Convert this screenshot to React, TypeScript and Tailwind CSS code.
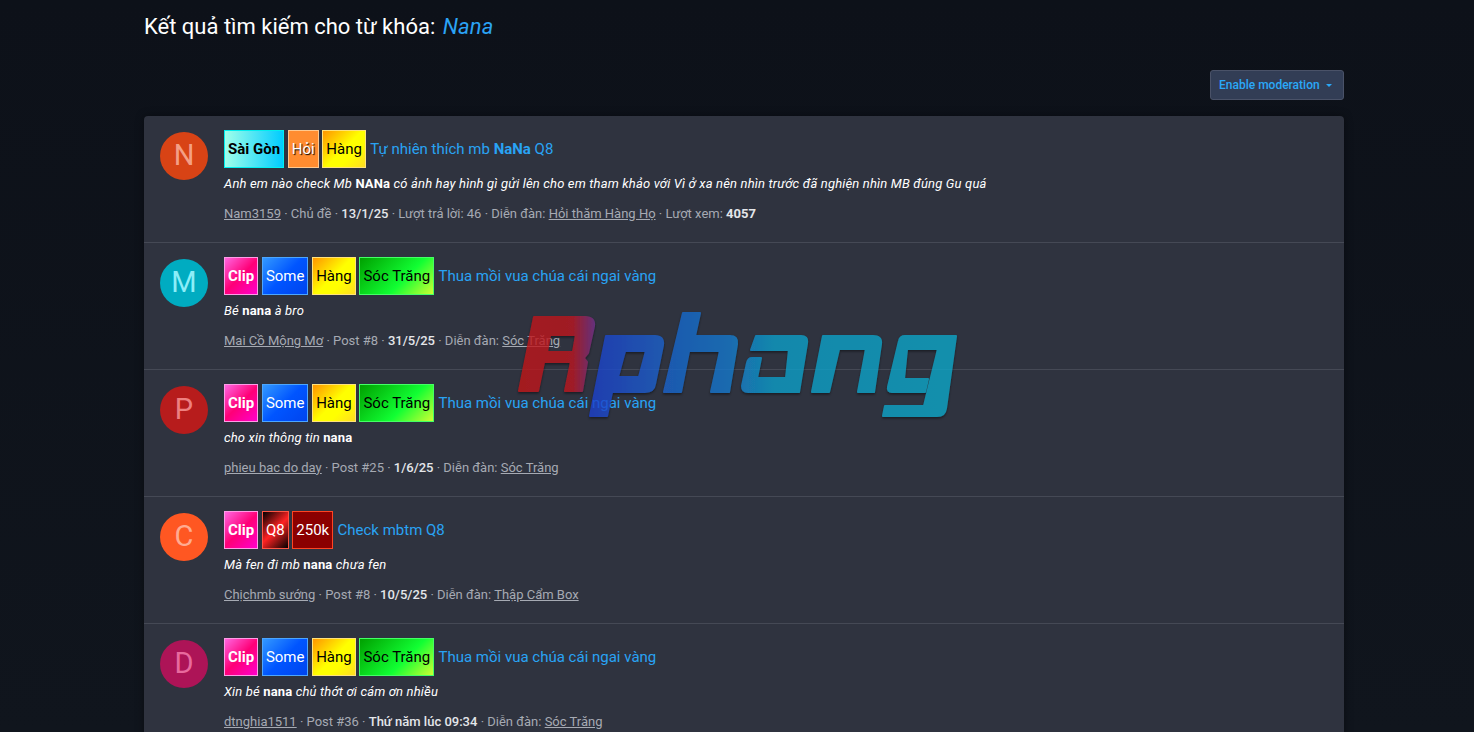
import React from "react";

type LabelKind = "saigon" | "hoi" | "hang" | "clip" | "some" | "soctrang" | "q8" | "k250";

const labelMap: Record<LabelKind, { text: string; cls: string }> = {
  saigon: {
    text: "Sài Gòn",
    cls: "font-bold text-black border-[#00f0f0] bg-[linear-gradient(90deg,#a0ffea,#00ccff)]",
  },
  hoi: {
    text: "Hỏi",
    cls: "text-white border-[#ffc98f] bg-[#ff8c30] [text-shadow:1px_1px_1px_#000]",
  },
  hang: {
    text: "Hàng",
    cls: "text-black border-[#ffe27a] bg-[linear-gradient(135deg,#ff9500,#ffff00_50%,#ffff00_68%,#ffdd22)]",
  },
  clip: {
    text: "Clip",
    cls: "font-bold text-white border-[#ff9be6] bg-[linear-gradient(135deg,#ff66e0,#ff0077_50%,#ff00cc)]",
  },
  some: {
    text: "Some",
    cls: "text-white border-[#4ca6ff] bg-[linear-gradient(135deg,#3399ff,#0055ff_50%,#0044ee)]",
  },
  soctrang: {
    text: "Sóc Trăng",
    cls: "text-black border-[#44ff66] bg-[linear-gradient(135deg,#00a000,#11ff33_60%,#ccff33)]",
  },
  q8: {
    text: "Q8",
    cls: "text-white border-[#ff5544] bg-[linear-gradient(135deg,#000000,#ff2222_50%,#000000)]",
  },
  k250: {
    text: "250k",
    cls: "text-white border-[#ff4422] bg-[#8b0000]",
  },
};

function Label({ kind }: { kind: LabelKind }) {
  const l = labelMap[kind];
  return (
    <span className={`flex h-[38px] items-center whitespace-nowrap border px-[3px] text-[15px] ${l.cls}`}>{l.text}</span>
  );
}

type Row = {
  letter: string;
  avatar: string;
  labels: LabelKind[];
  title: React.ReactNode;
  snippet: React.ReactNode;
  meta: React.ReactNode;
};

const Hl = ({ children }: { children: React.ReactNode }) => (
  <b className="font-bold not-italic">{children}</b>
);
const A = ({ children }: { children: React.ReactNode }) => <span className="underline">{children}</span>;
const D = ({ children }: { children: React.ReactNode }) => (
  <span className="font-medium text-[#e4e6ea]">{children}</span>
);

const thua = "Thua mồi vua chúa cái ngai vàng";

const rows: Row[] = [
  {
    letter: "N",
    avatar: "bg-[#d84315] text-[#f49f85]",
    labels: ["saigon", "hoi", "hang"],
    title: (
      <>
        Tự nhiên thích mb <b className="font-bold">NaNa</b> Q8
      </>
    ),
    snippet: (
      <>
        Anh em nào check Mb <Hl>NANa</Hl> có ảnh hay hình gì gửi lên cho em tham khảo với Vì ở xa nên nhìn trước đã
        nghiện nhìn MB đúng Gu quá
      </>
    ),
    meta: (
      <>
        <A>Nam3159</A> · Chủ đề · <D>13/1/25</D> · Lượt trả lời: 46 · Diễn đàn: <A>Hỏi thăm Hàng Họ</A> · Lượt xem:{" "}
        <b className="font-bold text-[#e4e6ea]">4057</b>
      </>
    ),
  },
  {
    letter: "M",
    avatar: "bg-[#00acc1] text-[#8ceef8]",
    labels: ["clip", "some", "hang", "soctrang"],
    title: thua,
    snippet: (
      <>
        Bé <Hl>nana</Hl> à bro
      </>
    ),
    meta: (
      <>
        <A>Mai Cồ Mộng Mơ</A> · Post #8 · <D>31/5/25</D> · Diễn đàn: <A>Sóc Trăng</A>
      </>
    ),
  },
  {
    letter: "P",
    avatar: "bg-[#b71c1c] text-[#ee8080]",
    labels: ["clip", "some", "hang", "soctrang"],
    title: thua,
    snippet: (
      <>
        cho xin thông tin <Hl>nana</Hl>
      </>
    ),
    meta: (
      <>
        <A>phieu bac do day</A> · Post #25 · <D>1/6/25</D> · Diễn đàn: <A>Sóc Trăng</A>
      </>
    ),
  },
  {
    letter: "C",
    avatar: "bg-[#ff5722] text-[#ffab91]",
    labels: ["clip", "q8", "k250"],
    title: "Check mbtm Q8",
    snippet: (
      <>
        Mà fen đi mb <Hl>nana</Hl> chưa fen
      </>
    ),
    meta: (
      <>
        <A>Chịchmb sướng</A> · Post #8 · <D>10/5/25</D> · Diễn đàn: <A>Thập Cẩm Box</A>
      </>
    ),
  },
  {
    letter: "D",
    avatar: "bg-[#ad1457] text-[#e86a9e]",
    labels: ["clip", "some", "hang", "soctrang"],
    title: thua,
    snippet: (
      <>
        Xin bé <Hl>nana</Hl> chủ thớt ơi cám ơn nhiều
      </>
    ),
    meta: (
      <>
        <A>dtnghia1511</A> · Post #36 · <D>Thứ năm lúc 09:34</D> · Diễn đàn: <A>Sóc Trăng</A>
      </>
    ),
  },
];

function Watermark() {
  return (
    <svg
      className="pointer-events-none absolute left-[510px] top-[305px] opacity-80"
      width={460}
      height={125}
      viewBox="510 305 460 125"
    >
      <defs>
        <linearGradient id="wmr" gradientUnits="userSpaceOnUse" x1="518" y1="0" x2="596" y2="0">
          <stop offset="0" stopColor="#c01518" />
          <stop offset="0.7" stopColor="#bc1720" />
          <stop offset="1" stopColor="#6e3290" />
        </linearGradient>
        <linearGradient id="wm" gradientUnits="userSpaceOnUse" x1="589" y1="0" x2="960" y2="0">
          <stop offset="0" stopColor="#1a3fcc" />
          <stop offset="0.2" stopColor="#1a62cc" />
          <stop offset="0.38" stopColor="#1479cc" />
          <stop offset="0.5" stopColor="#0f9ec8" />
          <stop offset="1" stopColor="#0fa7c8" />
        </linearGradient>
        <filter id="wms" x="-5%" y="-5%" width="110%" height="115%">
          <feDropShadow dx="0" dy="1.5" stdDeviation="1.2" floodColor="#000" floodOpacity="0.55" />
        </filter>
      </defs>
      <g strokeWidth={2} strokeLinejoin="round" fillRule="evenodd" filter="url(#wms)">
        {/* R */}
        <path
          fill="url(#wmr)"
          stroke="url(#wmr)"
          d="M534,317 L585,317 Q595,317 594,326 L588,353 L584,358 L587,362 L582,391 L565,391 L571,362 L544,362 L538,391 L519,391 Z M550,335 L576,335 L573,352 L547,352 Z"
        />
        <g fill="url(#wm)" stroke="url(#wm)">
          {/* p */}
          <path d="M606,336 L655,336 Q664,336 663,345 L655,384 Q654,392 645,392 L612,392 L607,416 L590,416 Z M625,351 L646,351 L639,377 L618,377 Z" />
          {/* h */}
          <path d="M683,313 L700,313 L695,336 L730,336 Q738,336 737,344 L729,392 L711,392 L720,351 L689,351 L681,392 L664,392 Z" />
          {/* a */}
          <path d="M756,336 L801,336 Q808,336 807,343 L799,392 L748,392 Q742,392 742,386 L747,363 Q748,358 752,358 L761,358 L757,378 L786,378 L789,350 L751,350 Z" />
          {/* n */}
          <path d="M823,336 L873,336 Q882,336 881,344 L874,392 L858,392 L866,349 L839,349 L829,392 L812,392 Z" />
          {/* g */}
          <path d="M905,336 L956,336 L946,408 Q945,416 937,416 L883,416 L885,406 L924,406 L938,349 L907,349 L904,379 L928,379 L925,392 L892,392 Q887,392 888,387 L899,341 Q900,336 905,336 Z" />
        </g>
      </g>
    </svg>
  );
}

export default function App() {
  return (
    <div
      className="relative h-screen overflow-hidden bg-[linear-gradient(180deg,#0d1119,#10151d)] text-white"
      style={{ fontFamily: "Roboto, 'Noto Sans', sans-serif" }}
    >
      <div className="ml-[144px] w-[1200px]">
        <h1 className="h-[54px] pt-[11px] text-[22px] leading-[32px] font-normal text-white">
          Kết quả tìm kiếm cho từ khóa:{" "}
          <em className="ml-[2px] italic tracking-[0.15px] text-[#2ba3f5]">Nana</em>
        </h1>
        <div className="mt-[16px] flex justify-end">
          <button className="flex h-[30px] w-[134px] items-center gap-[6px] rounded-[3px] border border-[#4a5268] bg-[#323d55] pl-[8px] text-[12px] font-medium text-[#2aa8f8]">
            Enable moderation
            <span className="mt-[1px] h-0 w-0 border-x-[3px] border-t-[3px] border-x-transparent border-t-[#2aa8f8]" />
          </button>
        </div>
        <div className="mt-[16px] rounded-[4px] bg-[#2f333f] shadow-[0_0_8px_rgba(0,0,0,0.4)]">
          {rows.map((r, i) => (
            <div key={i} className="flex h-[127px] gap-[16px] border-b border-[#454955] pl-[16px] pt-[14px]">
              <div
                className={`mt-[2px] flex h-[48px] w-[48px] shrink-0 items-center justify-center rounded-full text-[29px] ${r.avatar}`}
              >
                {r.letter}
              </div>
              <div className="min-w-0 flex-1">
                <div className="flex items-center gap-[3.7px]">
                  {r.labels.map((l, j) => (
                    <Label key={j} kind={l} />
                  ))}
                  <span className="ml-[0.6px] text-[15px] text-[#29a3f4]">{r.title}</span>
                </div>
                <div className="mt-[6px] text-[13px] leading-[19.5px] tracking-[0.16px] italic text-white">{r.snippet}</div>
                <div className="mt-[10px] text-[13px] leading-[19.5px] text-[#a6aab3]">{r.meta}</div>
              </div>
            </div>
          ))}
        </div>
      </div>
      <Watermark />
    </div>
  );
}
